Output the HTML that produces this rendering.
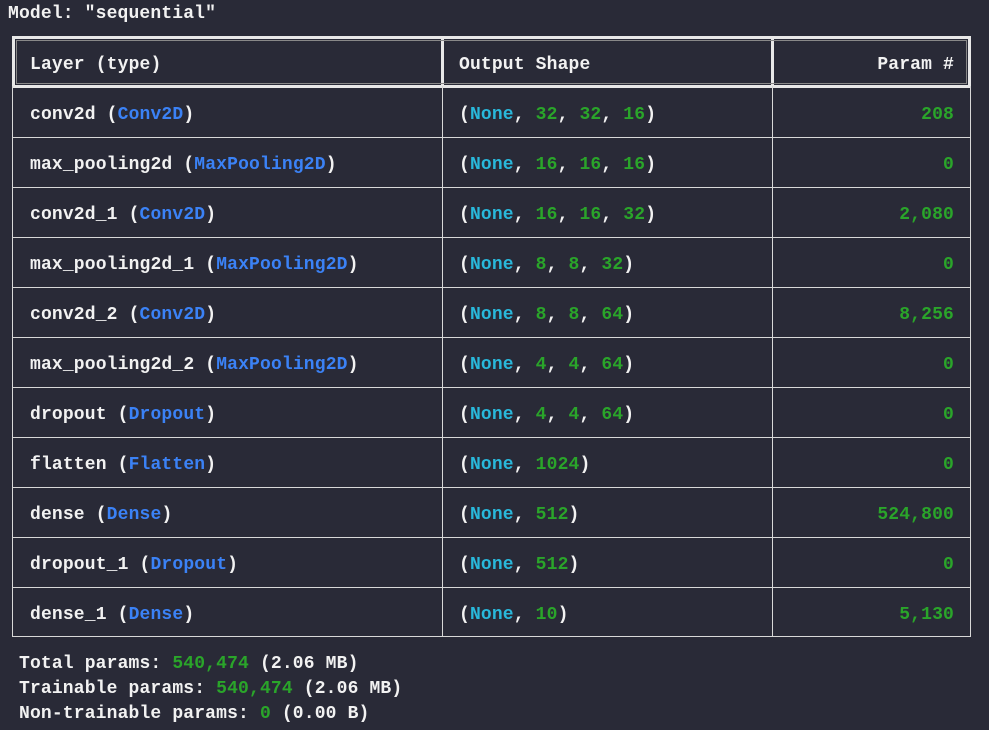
<!DOCTYPE html>
<html><head><style>
html,body{margin:0;padding:0;background:#292a37;width:989px;height:730px;overflow:hidden}
body{font-family:"Liberation Mono","DejaVu Sans Mono",monospace;font-size:18px;font-weight:bold;color:#f2f2f2;position:relative;letter-spacing:0.15px}
.t{position:absolute;white-space:pre;line-height:25px}
.b{color:#3b82f6}.c{color:#29b8db}.g{color:#2aa52a}
.box{position:absolute;box-sizing:border-box}
</style></head><body>
<div class="t" style="left:8px;top:2px">Model: "sequential"</div>
<div class="box" style="left:12px;top:36px;width:959px;height:52px;border:3px solid #e8e8e8"></div>
<div class="box" style="left:441px;top:36px;width:3px;height:52px;background:#e8e8e8"></div>
<div class="box" style="left:771px;top:36px;width:3px;height:52px;background:#e8e8e8"></div>
<div class="box" style="left:16px;top:40px;width:951px;height:44px;border:1px solid #888"></div>
<div class="box" style="left:12px;top:86px;width:959px;height:551px;border:1px solid #d8d8d8;border-top:none"></div>
<div class="box" style="left:442px;top:86px;width:1px;height:551px;background:#d8d8d8"></div>
<div class="box" style="left:772px;top:86px;width:1px;height:551px;background:#d8d8d8"></div>
<div id="lines"></div>
<div class="t" style="left:30px;top:53px">Layer (type)</div>
<div class="t" style="left:459px;top:53px">Output Shape</div>
<div class="t" style="right:35px;top:53px">Param #</div>
<div id="rows"></div>
<div class="t" style="left:19px;top:652px">Total params: <span class="g">540,474</span> (2.06 MB)
Trainable params: <span class="g">540,474</span> (2.06 MB)
Non-trainable params: <span class="g">0</span> (0.00 B)</div>
<script>
var rows=[
["conv2d","Conv2D",["32","32","16"],"208"],
["max_pooling2d","MaxPooling2D",["16","16","16"],"0"],
["conv2d_1","Conv2D",["16","16","32"],"2,080"],
["max_pooling2d_1","MaxPooling2D",["8","8","32"],"0"],
["conv2d_2","Conv2D",["8","8","64"],"8,256"],
["max_pooling2d_2","MaxPooling2D",["4","4","64"],"0"],
["dropout","Dropout",["4","4","64"],"0"],
["flatten","Flatten",["1024"],"0"],
["dense","Dense",["512"],"524,800"],
["dropout_1","Dropout",["512"],"0"],
["dense_1","Dense",["10"],"5,130"]];
var h="",l="";
rows.forEach(function(r,i){
 var y=88+i*50+15;
 h+='<div class="t" style="left:30px;top:'+y+'px">'+r[0]+' (<span class="b">'+r[1]+'</span>)</div>';
 h+='<div class="t" style="left:459px;top:'+y+'px">(<span class="c">None</span>, '+r[2].map(function(s){return '<span class="g">'+s+'</span>'}).join(', ')+')</div>';
 h+='<div class="t g" style="right:35px;top:'+y+'px">'+r[3]+'</div>';
 if(i>0) l+='<div class="box" style="left:12px;top:'+(87+i*50)+'px;width:959px;height:1px;background:#d8d8d8"></div>';
});
document.getElementById('rows').innerHTML=h;
document.getElementById('lines').innerHTML=l;
</script>
</body></html>
